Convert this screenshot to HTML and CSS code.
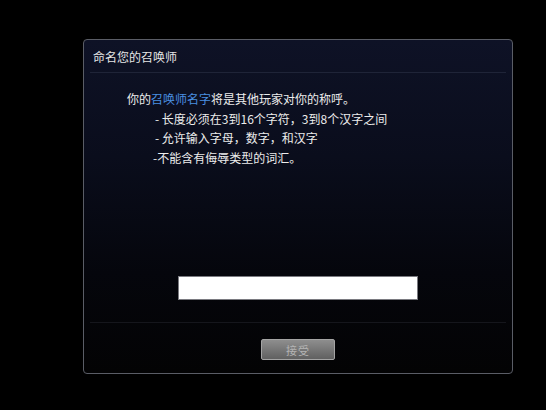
FILE: index.html
```html
<!DOCTYPE html>
<html lang="zh">
<head>
<meta charset="utf-8">
<link rel="stylesheet" href="styles.css">
</head>
<body>
<div class="dialog">
  <div class="header">命名您的召唤师</div>
  <div class="sep"></div>
  <div class="content">
    <div class="line">你的<span class="hl">召唤师名字</span>将是其他玩家对你的称呼。</div>
    <div class="line ind">- 长度必须在3到16个字符，3到8个汉字之间</div>
    <div class="line ind">- 允许输入字母，数字，和汉字</div>
    <div class="line ind2">-不能含有侮辱类型的词汇。</div>
  </div>
  <div class="input-row"><div class="input"></div></div>
  <div class="sep sep-bottom"></div>
  <div class="btn-row"><div class="btn">接受</div></div>
</div>
</body>
</html>
```

FILE: styles.css
```css
html, body {
  margin: 0;
  padding: 0;
  background: #000;
}
body {
  width: 546px;
  height: 410px;
  overflow: hidden;
  padding: 39px 0 0 83px;
  box-sizing: border-box;
  font-family: "Noto Sans CJK SC", "Noto Sans", sans-serif;
}
.dialog {
  width: 430px;
  height: 335px;
  box-sizing: border-box;
  border: 1px solid #5a5d66;
  border-radius: 4px;
  background: linear-gradient(to bottom, #0e1226 0%, #0a0d1c 35%, #05060c 70%, #030304 100%);
  display: flex;
  flex-direction: column;
}
.header {
  height: 32px;
  display: flex;
  align-items: center;
  padding-left: 9px;
  color: #e6e6e6;
  font-size: 12px;
}
.sep {
  height: 1px;
  margin: 0 6px;
  background: #1f2438;
}
.sep-bottom {
  background: #15161c;
}
.content {
  padding: 16px 0 0 43px;
  color: #ececec;
  font-size: 12px;
  line-height: 19.5px;
}
.line { white-space: nowrap; }
.ind { padding-left: 28px; }
.ind2 { padding-left: 26px; }
.hl { color: #4a8fe2; }
.input-row {
  display: flex;
  justify-content: center;
  margin-top: 109px;
  margin-bottom: 22px;
}
.input {
  width: 240px;
  height: 24px;
  box-sizing: border-box;
  background: #fff;
  border: 1px solid #7a7a80;
}
.btn-row {
  display: flex;
  justify-content: center;
  margin-top: 16px;
}
.btn {
  width: 74px;
  height: 21px;
  box-sizing: border-box;
  border: 1px solid #a4a4a4;
  border-radius: 2px;
  background: linear-gradient(to bottom, #8e8e8e, #606060);
  color: #b4b4b4;
  font-size: 11px;
  display: flex;
  align-items: center;
  justify-content: center;
  letter-spacing: 1px;
}
```
